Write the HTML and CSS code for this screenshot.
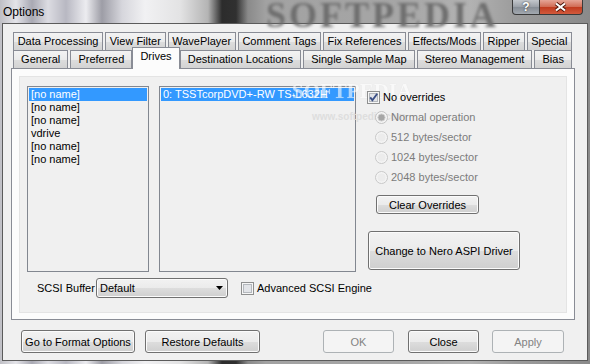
FILE: index.html
```html
<!DOCTYPE html>
<html lang="en">
<head>
  <meta charset="UTF-8">
  <title>Options</title>
  <link rel="stylesheet" href="styles.css">
</head>
<body>
  <div class="desktop">
    <div class="titlebar">
      <span class="caption">Options</span>
      <span class="wm-title">SOFTPEDIA</span>
      <div class="caption-btns">
        <div class="cap-help">?</div>
        <div class="cap-close">
          <svg width="42" height="14" viewBox="0 0 42 14">
            <path d="M16 3.5 L25 10.5 M25 3.5 L16 10.5" stroke="#4a1408" stroke-width="4" fill="none"/>
            <path d="M16 3.5 L25 10.5 M25 3.5 L16 10.5" stroke="#fff" stroke-width="2.2" fill="none"/>
          </svg>
        </div>
      </div>
    </div>

    <div class="client">
      <div class="tabs">
        <div class="tabrow">
          <div class="tab">Data Processing</div>
          <div class="tab">View Filter</div>
          <div class="tab">WavePlayer</div>
          <div class="tab">Comment Tags</div>
          <div class="tab">Fix References</div>
          <div class="tab">Effects/Mods</div>
          <div class="tab">Ripper</div>
          <div class="tab">Special</div>
        </div>
        <div class="tabrow">
          <div class="tab">General</div>
          <div class="tab">Preferred</div>
          <div class="tab active">Drives</div>
          <div class="tab">Destination Locations</div>
          <div class="tab">Single Sample Map</div>
          <div class="tab">Stereo Management</div>
          <div class="tab">Bias</div>
        </div>
      </div>

      <div class="panel">
        <div class="page">
          <span class="wm-big">SOFTPEDIA</span>
          <span class="wm-url">www.softpedia.com</span>

          <div class="top">
            <div class="listbox lb-drives">
              <div class="item sel">[no name]</div>
              <div class="item">[no name]</div>
              <div class="item">[no name]</div>
              <div class="item">vdrive</div>
              <div class="item">[no name]</div>
              <div class="item">[no name]</div>
            </div>
            <div class="listbox lb-devices">
              <div class="item sel">0: TSSTcorpDVD+-RW TS-L632H</div>
            </div>
            <div class="overrides">
              <div class="opt">
                <svg class="box" width="13" height="13" viewBox="0 0 13 13">
                  <rect x="0.5" y="0.5" width="12" height="12" fill="#f6f6f6" stroke="#8e8f8f"/>
                  <rect x="2.5" y="2.5" width="8" height="8" fill="#e2e4e8" stroke="#b4b8bd"/>
                  <path d="M3.2 6.4 L5.4 9.2 L10.2 2.8" fill="none" stroke="#3b4f86" stroke-width="1.9"/>
                </svg>
                <span>No overrides</span>
              </div>
              <div class="opt radio">
                <svg width="13" height="13" viewBox="0 0 13 13">
                  <circle cx="6.5" cy="6.5" r="6" fill="#f4f4f4" stroke="#c2c2c2"/>
                  <circle cx="6.5" cy="6.5" r="3.6" fill="#a6a6a6" stroke="#cfcfcf"/>
                </svg>
                <span>Normal operation</span>
              </div>
              <div class="opt radio">
                <svg width="13" height="13" viewBox="0 0 13 13">
                  <circle cx="6.5" cy="6.5" r="6" fill="#f4f4f4" stroke="#c8c8c8"/>
                  <circle cx="6.5" cy="6.5" r="4" fill="#ececec"/>
                </svg>
                <span>512 bytes/sector</span>
              </div>
              <div class="opt radio">
                <svg width="13" height="13" viewBox="0 0 13 13">
                  <circle cx="6.5" cy="6.5" r="6" fill="#f4f4f4" stroke="#c8c8c8"/>
                  <circle cx="6.5" cy="6.5" r="4" fill="#ececec"/>
                </svg>
                <span>1024 bytes/sector</span>
              </div>
              <div class="opt radio">
                <svg width="13" height="13" viewBox="0 0 13 13">
                  <circle cx="6.5" cy="6.5" r="6" fill="#f4f4f4" stroke="#c8c8c8"/>
                  <circle cx="6.5" cy="6.5" r="4" fill="#ececec"/>
                </svg>
                <span>2048 bytes/sector</span>
              </div>
              <button class="btn btn-clear">Clear Overrides</button>
              <button class="btn btn-nero">Change to Nero ASPI Driver</button>
            </div>
          </div>

          <div class="scsi">
            <span class="scsi-label">SCSI Buffer</span>
            <div class="combo">
              <span>Default</span>
              <svg width="7" height="4" viewBox="0 0 7 4"><path d="M0 0 H7 L3.5 4 Z" fill="#000"/></svg>
            </div>
            <svg class="box adv" width="13" height="13" viewBox="0 0 13 13">
              <rect x="0.5" y="0.5" width="12" height="12" fill="#f6f6f6" stroke="#8e8f8f"/>
              <rect x="2.5" y="2.5" width="8" height="8" fill="#e2e4e8" stroke="#b4b8bd"/>
            </svg>
            <span>Advanced SCSI Engine</span>
          </div>
        </div>
      </div>

      <div class="buttons">
        <button class="btn b-format">Go to Format Options</button>
        <button class="btn b-restore">Restore Defaults</button>
        <button class="btn b-ok disabled">OK</button>
        <button class="btn b-close">Close</button>
        <button class="btn b-apply disabled">Apply</button>
      </div>
    </div>
  </div>
</body>
</html>
```

FILE: styles.css
```css
* {
  box-sizing: border-box;
}
body {
  margin: 0;
  font-family: "Liberation Sans", Arial, sans-serif;
  font-size: 11px;
  color: #000;
}
.desktop {
  width: 590px;
  height: 364px;
  overflow: hidden;
  position: relative;
  background: linear-gradient(90deg, #bfbfc5 0px, #e4e4e9 16px, #a9a9b3 32px, #dcdce2 48px, #b8b8c2 66px, #ececf0 86px, #9d9da6 102px, #d6d6dc 122px, #f1f1f3 145px, #e3e3e4 180px, #b4b4b4 208px, #2c2c2c 222px, #303030 236px, #8a8a8a 248px, #a2a2a2 266px, #a6a6a6 400px, #b2b2b2 470px, #9c9c9c 515px, #8a8a8a 590px);
}

/* title bar */
.titlebar {
  height: 23px;
  display: flex;
  align-items: flex-start;
  position: relative;
}
.caption {
  font-size: 12px;
  padding: 5px 0 0 3px;
  position: relative;
  z-index: 1;
}
.wm-title {
  position: absolute;
  left: 266px;
  top: -3px;
  font: bold 36px/36px "Liberation Serif", serif;
  letter-spacing: 3px;
  color: #6e6e6e;
  filter: blur(1.4px);
}
.caption-btns {
  margin-left: auto;
  margin-right: 7px;
  display: flex;
  position: relative;
  z-index: 1;
}
.cap-help {
  width: 28px;
  height: 15px;
  border: 1px solid #3a3a3a;
  border-top: none;
  border-radius: 0 0 0 4px;
  background: linear-gradient(#c3c7cc, #9aa0a7 50%, #868d95 51%, #a3a9b0);
  color: #fff;
  font: bold 12px/14px "Liberation Sans", sans-serif;
  text-align: center;
  text-shadow: 0 0 2px #222;
}
.cap-close {
  width: 43px;
  height: 15px;
  border: 1px solid #3a3a3a;
  border-left: none;
  border-top: none;
  border-radius: 0 0 4px 0;
  background: linear-gradient(#e5a596, #d06a53 50%, #c03a1e 51%, #d25a3c);
}
.cap-close svg {
  display: block;
}

/* dialog client area */
.client {
  margin-left: 2px;
  width: 586px;
  height: 338px;
  border: 1px solid #5b5b5b;
  background: #f0f0f0;
}

.tabs {
  margin: 8px 0 0 10px;
  width: 559px;
}
.tabrow {
  display: flex;
  gap: 2px;
  height: 18px;
}
.tab {
  flex: 1 1 auto;
  height: 18px;
  border: 1px solid #898c95;
  border-bottom: none;
  background: linear-gradient(#f3f3f3, #ebebeb 50%, #dddddd 51%, #d3d3d3);
  text-align: center;
  line-height: 17px;
  padding: 0 3px;
  white-space: nowrap;
}
.tab.active {
  align-self: flex-start;
  height: 22px;
  margin: -3px -2px 0;
  background: #fcfcfc;
  line-height: 17px;
  position: relative;
  z-index: 1;
}

.panel {
  margin-left: 8px;
  width: 564px;
  height: 252px;
  border: 1px solid #898c95;
  background: #fcfcfc;
  padding: 7px 0 0 7px;
}
.page {
  width: 548px;
  height: 237px;
  border: 1px solid #e4e4e4;
  background: #f0f0f0;
  position: relative;
  padding: 9px 0 0 7px;
}

.top {
  display: flex;
  align-items: flex-start;
}
.listbox {
  height: 186px;
  border: 1px solid #828790;
  padding: 1px;
}
.lb-drives {
  width: 122px;
}
.lb-devices {
  width: 197px;
  margin-left: 10px;
}
.item {
  height: 13px;
  line-height: 13px;
  padding-left: 2px;
  white-space: nowrap;
}
.item.sel {
  background: #3399ff;
  color: #fff;
}

.overrides {
  margin-left: 11px;
  padding-top: 1px;
  display: flex;
  flex-direction: column;
  align-items: flex-start;
  position: relative;
  z-index: 1;
}
.opt {
  height: 20px;
  display: flex;
  align-items: center;
  gap: 3px;
  white-space: nowrap;
}
.opt svg {
  display: block;
  flex: none;
}
.opt.radio {
  padding-left: 8px;
  color: #7c7c7c;
}

.btn {
  font: inherit;
  color: #000;
  border: 1px solid #707070;
  border-radius: 3px;
  background: linear-gradient(#f2f2f2, #ebebeb 50%, #dddddd 51%, #cfcfcf);
  box-shadow: inset 0 0 0 1px #fbfbfb;
  padding: 0;
  display: flex;
  align-items: center;
  justify-content: center;
  white-space: nowrap;
}
.btn.disabled {
  border-color: #adb2b5;
  background: #f4f4f4;
  box-shadow: none;
  color: #838383;
}
.btn-clear {
  margin: 8px 0 0 9px;
  width: 103px;
  height: 19px;
}
.btn-nero {
  margin: 17px 0 0 1px;
  width: 152px;
  height: 39px;
}

.scsi {
  display: flex;
  align-items: center;
  margin-top: 6px;
  height: 20px;
}
.scsi-label {
  width: 59px;
  margin-left: 10px;
  white-space: nowrap;
}
.combo {
  width: 132px;
  height: 20px;
  border: 1px solid #707070;
  border-radius: 3px;
  background: linear-gradient(#f2f2f2, #ebebeb 50%, #dddddd 51%, #cfcfcf);
  box-shadow: inset 0 0 0 1px #fbfbfb;
  display: flex;
  align-items: center;
  justify-content: space-between;
  padding: 0 4px 0 3px;
}
.combo svg {
  display: block;
}
.box.adv {
  margin: 0 3px 0 13px;
  display: block;
}

/* faint watermark over the page, drawn under the controls */
.wm-big {
  position: absolute;
  left: 272px;
  top: 4px;
  font: bold 21px/21px "Liberation Serif", serif;
  color: #fff;
  opacity: 0.6;
  text-shadow: 0 0 1px #d2d2d2;
  white-space: nowrap;
}
.wm-url {
  position: absolute;
  left: 292px;
  top: 35px;
  font: bold 10px/10px "Liberation Sans", sans-serif;
  color: #dedede;
  white-space: nowrap;
}

.buttons {
  display: flex;
  margin: 10px 0 0 18px;
}
.buttons .btn {
  height: 23px;
}
.b-format {
  width: 114px;
}
.b-restore {
  width: 115px;
  margin-left: 10px;
}
.b-ok {
  width: 71px;
  margin-left: 63px;
}
.b-close {
  width: 71px;
  margin-left: 14px;
}
.b-apply {
  width: 72px;
  margin-left: 13px;
}
```
